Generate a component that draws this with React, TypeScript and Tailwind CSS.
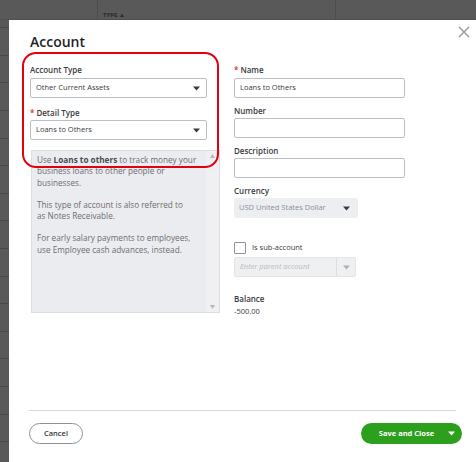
import React from "react";

const Caret = ({ className = "" }: { className?: string }) => (
  <svg width="7" height="5" viewBox="0 0 7 5" className={className}>
    <path d="M0 0.5h7L3.5 4.5z" fill="currentColor" />
  </svg>
);

export default function App() {
  const rowLines = [27, 55, 82, 110, 138, 165, 193, 220, 248, 276, 303, 331, 358, 386, 414, 441];
  return (
    <div
      className="relative w-[476px] h-[462px] overflow-hidden bg-[#595959]"
      style={{ fontFamily: "'Open Sans', Lato, sans-serif" }}
    >
      {/* background table */}
      <div className="absolute inset-0">
        {rowLines.map((y) => (
          <div key={y} className="absolute left-0 w-[9px] h-px bg-[#4a4a4a]" style={{ top: y }} />
        ))}
        <div className="absolute left-0 right-0 top-0 h-[20px] border-b border-[#4f4f4f]" />
        <div className="absolute left-[97px] top-0 h-[20px] w-px bg-[#4d4d4d]" />
        <div className="absolute left-[335px] top-0 h-[20px] w-px bg-[#4d4d4d]" />
        <div className="absolute left-[103px] top-[12px] text-[6px] leading-none font-bold text-[#2a2a2a]">
          TYPE ▲
        </div>
      </div>

      {/* modal */}
      <div className="absolute left-[9px] top-[20px] right-0 bottom-0 bg-white flex flex-col">
        <button className="absolute right-[6px] top-[6px] text-[#8d9096]">
          <svg width="12" height="12" viewBox="0 0 12 12">
            <path d="M1 1L11 11M11 1L1 11" stroke="currentColor" strokeWidth="1.2" />
          </svg>
        </button>

        <div className="pl-[21px] pt-[13px] text-[14px] font-semibold text-[#1f1f1f] leading-[18px]">
          Account
        </div>

        <div className="flex pl-[21px] pt-[13px] flex-1">
          {/* left column */}
          <div className="w-[190px] flex flex-col">
            <div className="text-[8px] font-semibold text-[#393a3d] leading-[11px] h-[14px]">Account Type</div>
            <div className="w-[177px] h-[20px] border border-[#babec5] rounded-[2px] flex items-center justify-between pl-[5px] pr-[6px] text-[7.5px] text-[#393a3d]">
              <span>Other Current Assets</span>
              <Caret className="text-[#393a3d]" />
            </div>
            <div className="mt-[9px] text-[8px] font-semibold text-[#393a3d] leading-[11px] h-[13px]">
              <span className="text-[#d52b1e] mr-[2px]">*</span>Detail Type
            </div>
            <div className="w-[177px] h-[20px] border border-[#babec5] rounded-[2px] flex items-center justify-between pl-[5px] pr-[6px] text-[7.5px] text-[#393a3d]">
              <span>Loans to Others</span>
              <Caret className="text-[#393a3d]" />
            </div>
            <div className="mt-[10px] ml-[1px] w-[189px] h-[163px] bg-[#ebecef] border border-[#dcdde0] flex">
              <div className="flex-1 pl-[5px] pt-[3px] overflow-hidden">
                <div className="text-[8.2px] leading-[11.3px] text-[#6b6c72] whitespace-nowrap">
                  <p>
                    Use <b className="text-[#4a4b50]">Loans to others</b> to track money your
                    <br />
                    business loans to other people or
                    <br />
                    businesses.
                  </p>
                  <p className="mt-[11px]">
                    This type of account is also referred to
                    <br />
                    as Notes Receivable.
                  </p>
                  <p className="mt-[11px]">
                    For early salary payments to employees,
                    <br />
                    use Employee cash advances, instead.
                  </p>
                </div>
              </div>
              <div className="w-[13px] bg-[#f0f0f2] flex flex-col items-center justify-between py-[3px] text-[#b4b6ba]">
                <svg width="5" height="4" viewBox="0 0 5 4"><path d="M0 4h5L2.5 0z" fill="currentColor" /></svg>
                <svg width="5" height="4" viewBox="0 0 5 4"><path d="M0 0h5L2.5 4z" fill="currentColor" /></svg>
              </div>
            </div>
          </div>

          {/* right column */}
          <div className="ml-[14px] w-[171px] flex flex-col">
            <div className="text-[8px] font-semibold text-[#393a3d] leading-[11px] h-[14px]">
              <span className="text-[#d52b1e] mr-[2px]">*</span>Name
            </div>
            <div className="h-[20px] border border-[#babec5] rounded-[2px] flex items-center pl-[5px] text-[7.5px] text-[#393a3d]">
              Loans to Others
            </div>
            <div className="mt-[7px] text-[8px] font-semibold text-[#393a3d] leading-[11px] h-[13px]">Number</div>
            <div className="h-[20px] border border-[#babec5] rounded-[2px]" />
            <div className="mt-[7px] text-[8px] font-semibold text-[#393a3d] leading-[11px] h-[13px]">Description</div>
            <div className="h-[20px] border border-[#babec5] rounded-[2px]" />
            <div className="mt-[7px] text-[8px] font-semibold text-[#393a3d] leading-[11px] h-[13px]">Currency</div>
            <div className="w-[124px] h-[20px] bg-[#eceef1] rounded-[2px] flex items-center justify-between pl-[5px] pr-[8px] text-[7.5px] text-[#8d9096]">
              <span>USD United States Dollar</span>
              <Caret className="text-[#393a3d]" />
            </div>
            <div className="mt-[23px] flex items-center h-[13px]">
              <div className="w-[12px] h-[12px] border border-[#8d9096] rounded-[1px] bg-white" />
              <span className="ml-[6px] text-[7.5px] text-[#393a3d]">Is sub-account</span>
            </div>
            <div className="mt-[3px] w-[122px] h-[20px] bg-[#eff0f2] border border-[#e3e4e7] rounded-[2px] flex items-center">
              <span className="flex-1 pl-[5px] text-[7.5px] italic text-[#b8babf]">Enter parent account</span>
              <div className="w-[19px] h-full border-l border-[#dcdde0] flex items-center justify-center text-[#aeb0b5]">
                <Caret />
              </div>
            </div>
            <div className="mt-[16px] text-[8px] font-semibold text-[#393a3d] leading-[11px] h-[13px]">Balance</div>
            <div className="text-[7.5px] text-[#393a3d] leading-[11px]">-500.00</div>
          </div>
        </div>

        {/* footer */}
        <div className="mx-[20px] border-t border-[#d4d7dc]" />
        <div className="flex items-center justify-between pl-[20px] pr-[14px] pt-[12px] pb-[18px]">
          <button className="w-[54px] h-[21px] rounded-full border border-[#8d9096] text-[7.5px] font-semibold text-[#393a3d] bg-white">
            Cancel
          </button>
          <div className="w-[101px] h-[21px] rounded-full bg-[#2ca01c] flex items-center text-white">
            <span className="flex-1 text-center text-[7.5px] font-bold pl-[4px]">Save and Close</span>
            <Caret className="mr-[7px]" />
          </div>
        </div>

        {/* red annotation */}
        <div className="absolute left-[13px] top-[32px] w-[197px] h-[116px] rounded-[14px] border-2 border-[#e3000f] pointer-events-none" />
      </div>
    </div>
  );
}
